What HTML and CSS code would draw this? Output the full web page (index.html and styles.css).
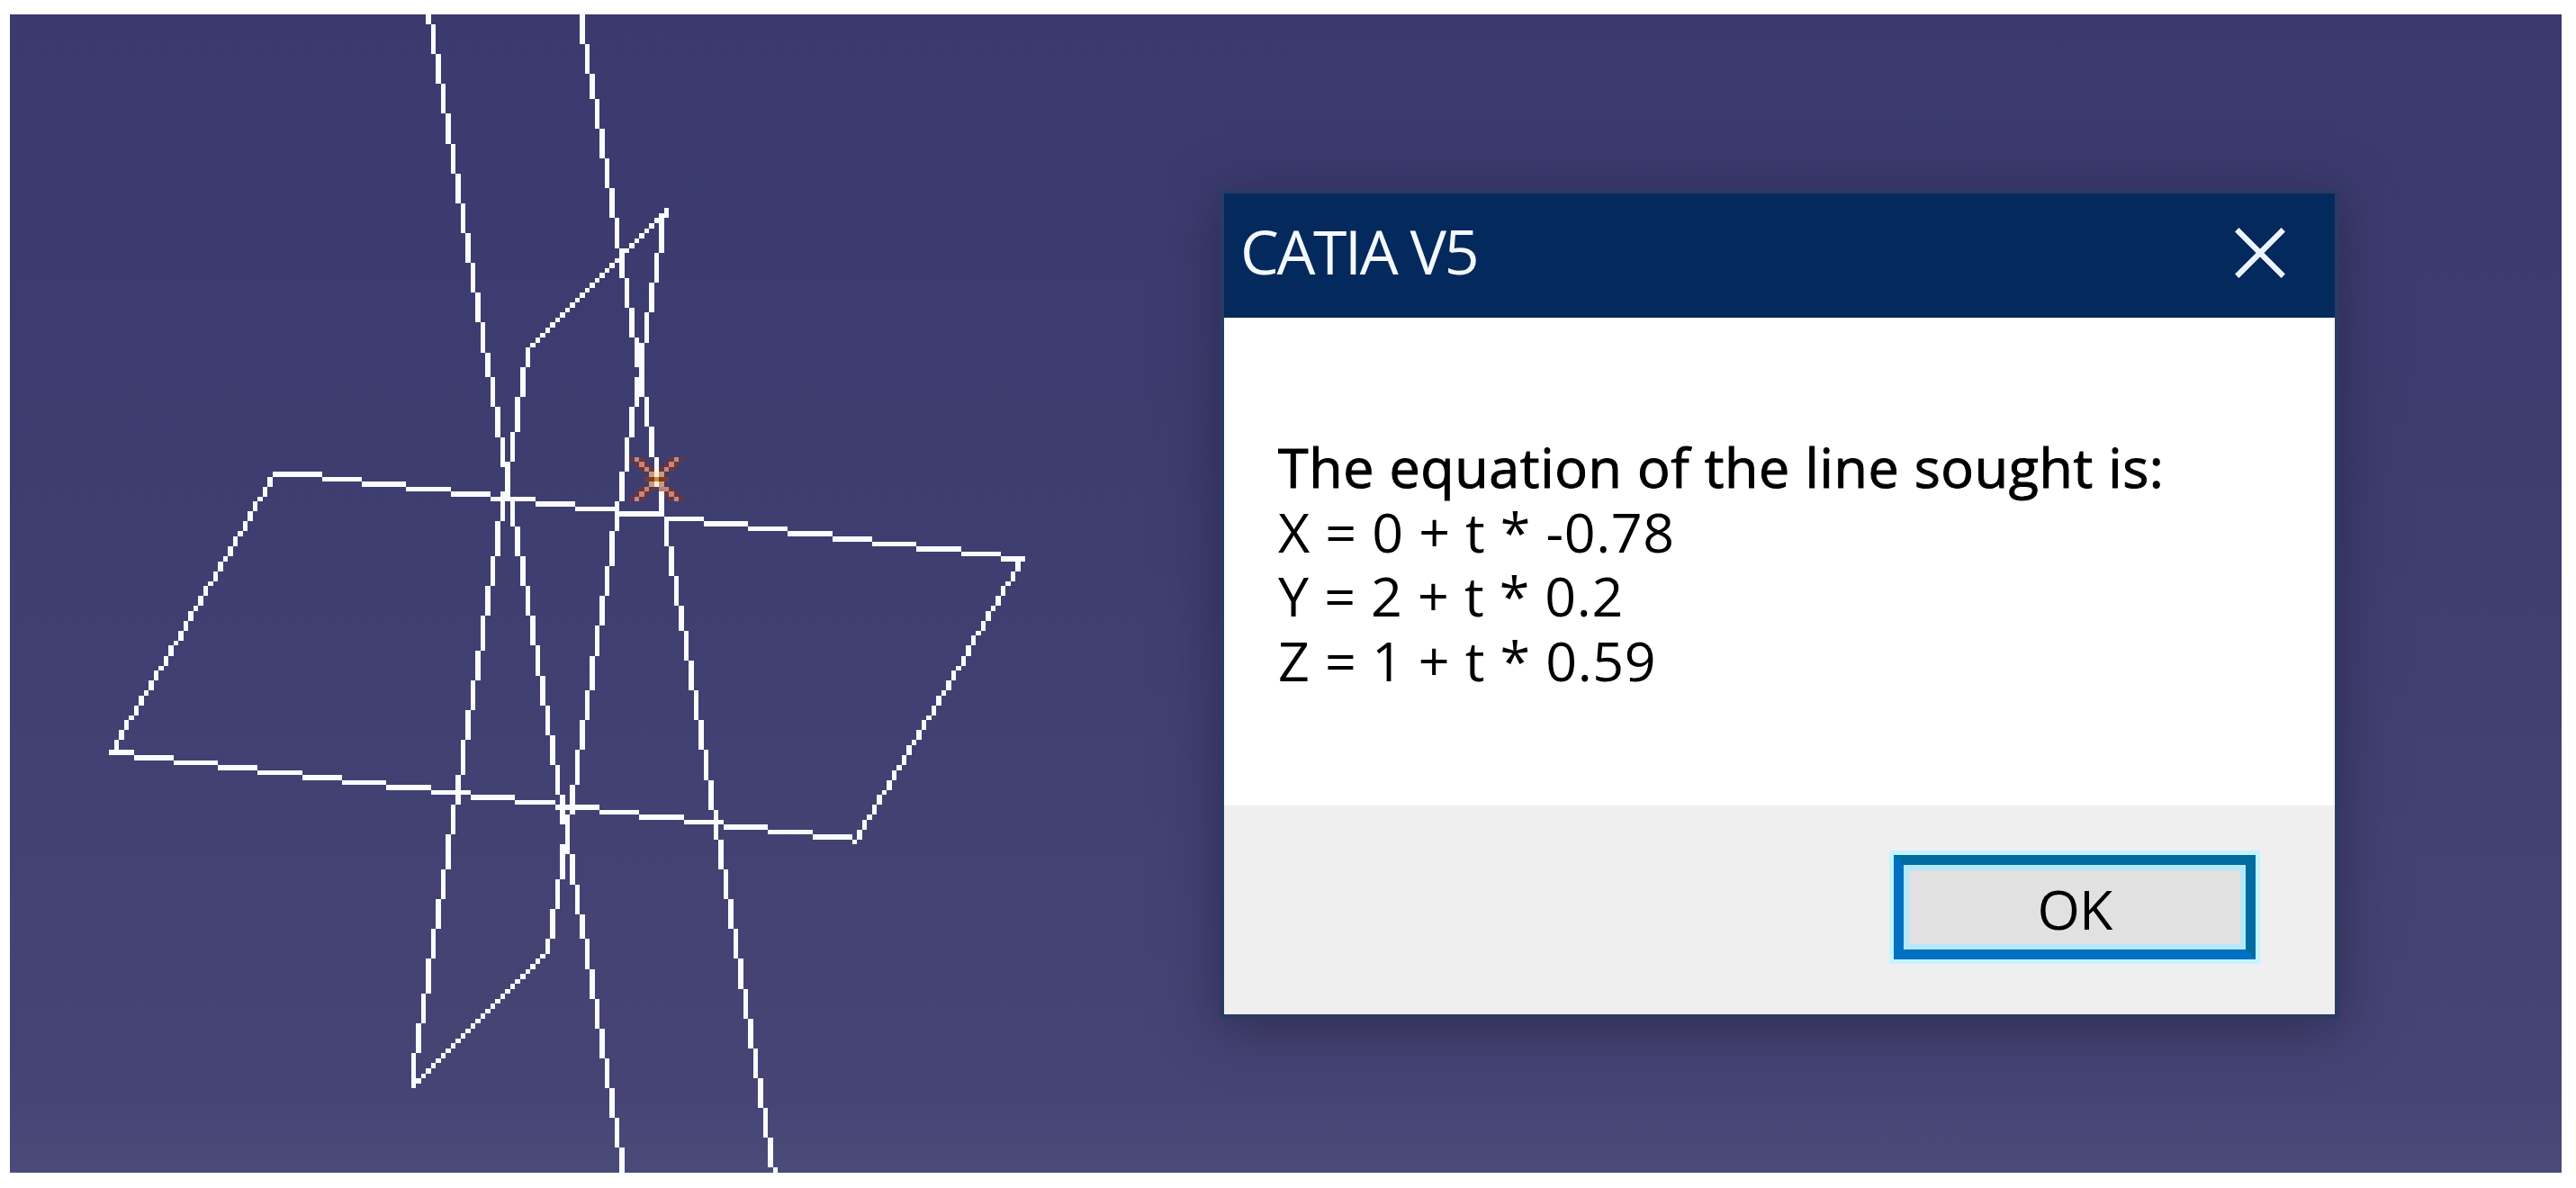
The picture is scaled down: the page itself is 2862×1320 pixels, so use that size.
FILE: index.html
```html
<!DOCTYPE html>
<html lang="en">
<head>
	<meta charset="utf-8">
	<title>CATIA V5</title>
	<link rel="stylesheet" href="styles.css">
</head>
<body>
	<main class="viewport">
		<canvas class="scene" id="scene" width="515" height="233"></canvas>
		<section class="dialog">
			<header class="titlebar">
				<h1 class="title">CATIA V5</h1>
				<svg class="close" viewBox="0 0 10 10">
					<path d="M0.4 0.4L9.6 9.6M9.6 0.4L0.4 9.6"/>
				</svg>
			</header>
			<div class="message">
				<p class="intro">The equation of the line sought is:</p>
				<p class="eq-x">X = 0 + t * -0.78</p>
				<p class="eq-y">Y = 2 + t * 0.2</p>
				<p class="eq-z">Z = 1 + t * 0.59</p>
			</div>
			<footer class="actions">
				<button class="ok" type="button">OK</button>
			</footer>
		</section>
	</main>
	<script src="scene.js"></script>
</body>
</html>
```
FILE: styles.css
```css
body
{
	margin: 0;
	background: #ffffff;
	font-family: "Open Sans", "Noto Sans", sans-serif;
}
.viewport
{
	position: relative;
	width: 2835px;
	height: 1287px;
	margin: 16px 0 0 11px;
	background: linear-gradient(#3a3a6f 0%, #3e3d70 40%, #434273 75%, #454475 93%, #4b4b79 100%);
	overflow: hidden;
}
.scene
{
	display: block;
	width: 100%;
	height: 100%;
	image-rendering: pixelated;
}
.dialog
{
	position: absolute;
	left: 1344px;
	top: 194px;
	display: flex;
	flex-direction: column;
	width: 1234px;
	height: 912px;
	border: 5px solid #2c3b62;
	box-shadow: 0 10px 56px rgba(30, 22, 50, 0.5);
}
.titlebar
{
	display: flex;
	justify-content: space-between;
	align-items: center;
	flex: none;
	height: 138px;
	padding: 0 55px 6px 18px;
	box-sizing: border-box;
	background: #04295c;
}
.title
{
	margin: 0;
	padding-bottom: 4px;
	color: #f4f8ff;
	font-size: 68px;
	font-weight: 400;
	line-height: 80px;
	letter-spacing: -2.4px;
}
.close
{
	width: 56px;
	height: 56px;
	fill: none;
	stroke: #eef3ff;
	stroke-width: 1.1;
}
.message
{
	flex: 1;
	padding: 130px 60px 0;
	background: #ffffff;
	color: #000000;
	font-size: 61px;
	line-height: 71.7px;
	letter-spacing: 0.6px;
}
.message p
{
	margin: 0;
	white-space: pre;
}
.message .intro
{
	-webkit-text-stroke: 1px #000000;
}
.actions
{
	display: flex;
	justify-content: flex-end;
	align-items: flex-start;
	flex: none;
	height: 232px;
	padding: 55px 88px 0 0;
	box-sizing: border-box;
	background: #efefef;
}
.ok
{
	width: 402px;
	height: 116px;
	padding: 4px 0 0;
	border: 11px solid;
	border-color: #006ca0 #006ca0 #0070c0 #0070c0;
	background: #e1e1e1;
	box-shadow: 0 0 0 5px #c4f4ff, inset 0 0 0 6px #b4e8fc;
	color: #000000;
	font-family: inherit;
	font-size: 61px;
	line-height: 80px;
	letter-spacing: -1px;
}
```
FILE: scene.js
```js
var ctx = document.getElementById('scene').getContext('2d');
ctx.translate(-2, -3);

function dot(x, y, color)
{
	ctx.fillStyle = color;
	ctx.fillRect(x, y, 1, 1);
}

// aliased line, stepping along its longer axis
function line(x0, y0, x1, y1)
{
	if (Math.abs(y1 - y0) > Math.abs(x1 - x0))
		for (var y = y0; y < y1; y++)
			dot(Math.floor(x0 + (x1 - x0) * (y - y0) / (y1 - y0)), y, '#fafcff');
	else
		for (var x = x0; x < x1; x++)
			dot(x, Math.floor(y0 + (y1 - y0) * (x - x0) / (x1 - x0)), '#fafcff');
}

// the two parallel edges that run out of the view
line(86.73, 3, 125.91, 236);
line(117.15, 3, 156.33, 236);

// horizontal plane
line(56, 95.02, 207, 112.62);
line(205.9, 113, 172, 170);
line(22, 151.51, 172, 169.05);
line(55.49, 95, 22.45, 151);

// vertical plane
line(107, 69.5, 135, 41.5);
line(106.562, 70, 82.855, 219);
line(134.128, 43, 110.46, 192);
line(84, 217.5, 110, 191.5);

// point marker
for (var i = -4; i <= 4; i++)
	for (var s = -1; s <= 1; s += 2)
	{
		if (Math.abs(i) < 2) continue;
		dot(131 + i, 96 + s * i, 'rgba(135, 50, 28, 0.6)');
		dot(133 + i, 96 + s * i, 'rgba(135, 50, 28, 0.6)');
	}
for (i = -4; i <= 4; i++)
{
	var c = Math.abs(i) > 3 ? '#bb8a92' : Math.abs(i) > 1 ? '#cc8474' : '#d09878';
	dot(132 + i, 96 + i, c);
	dot(132 + i, 96 - i, c);
}
dot(132, 95, '#ffeed0');
dot(132, 96, '#cc8848');
dot(132, 97, '#ffeed0');
dot(131, 96, '#7a3c22');
dot(133, 96, '#7a3c22');
dot(130, 96, '#7a3c32');
dot(134, 96, '#7a3c32');
```
